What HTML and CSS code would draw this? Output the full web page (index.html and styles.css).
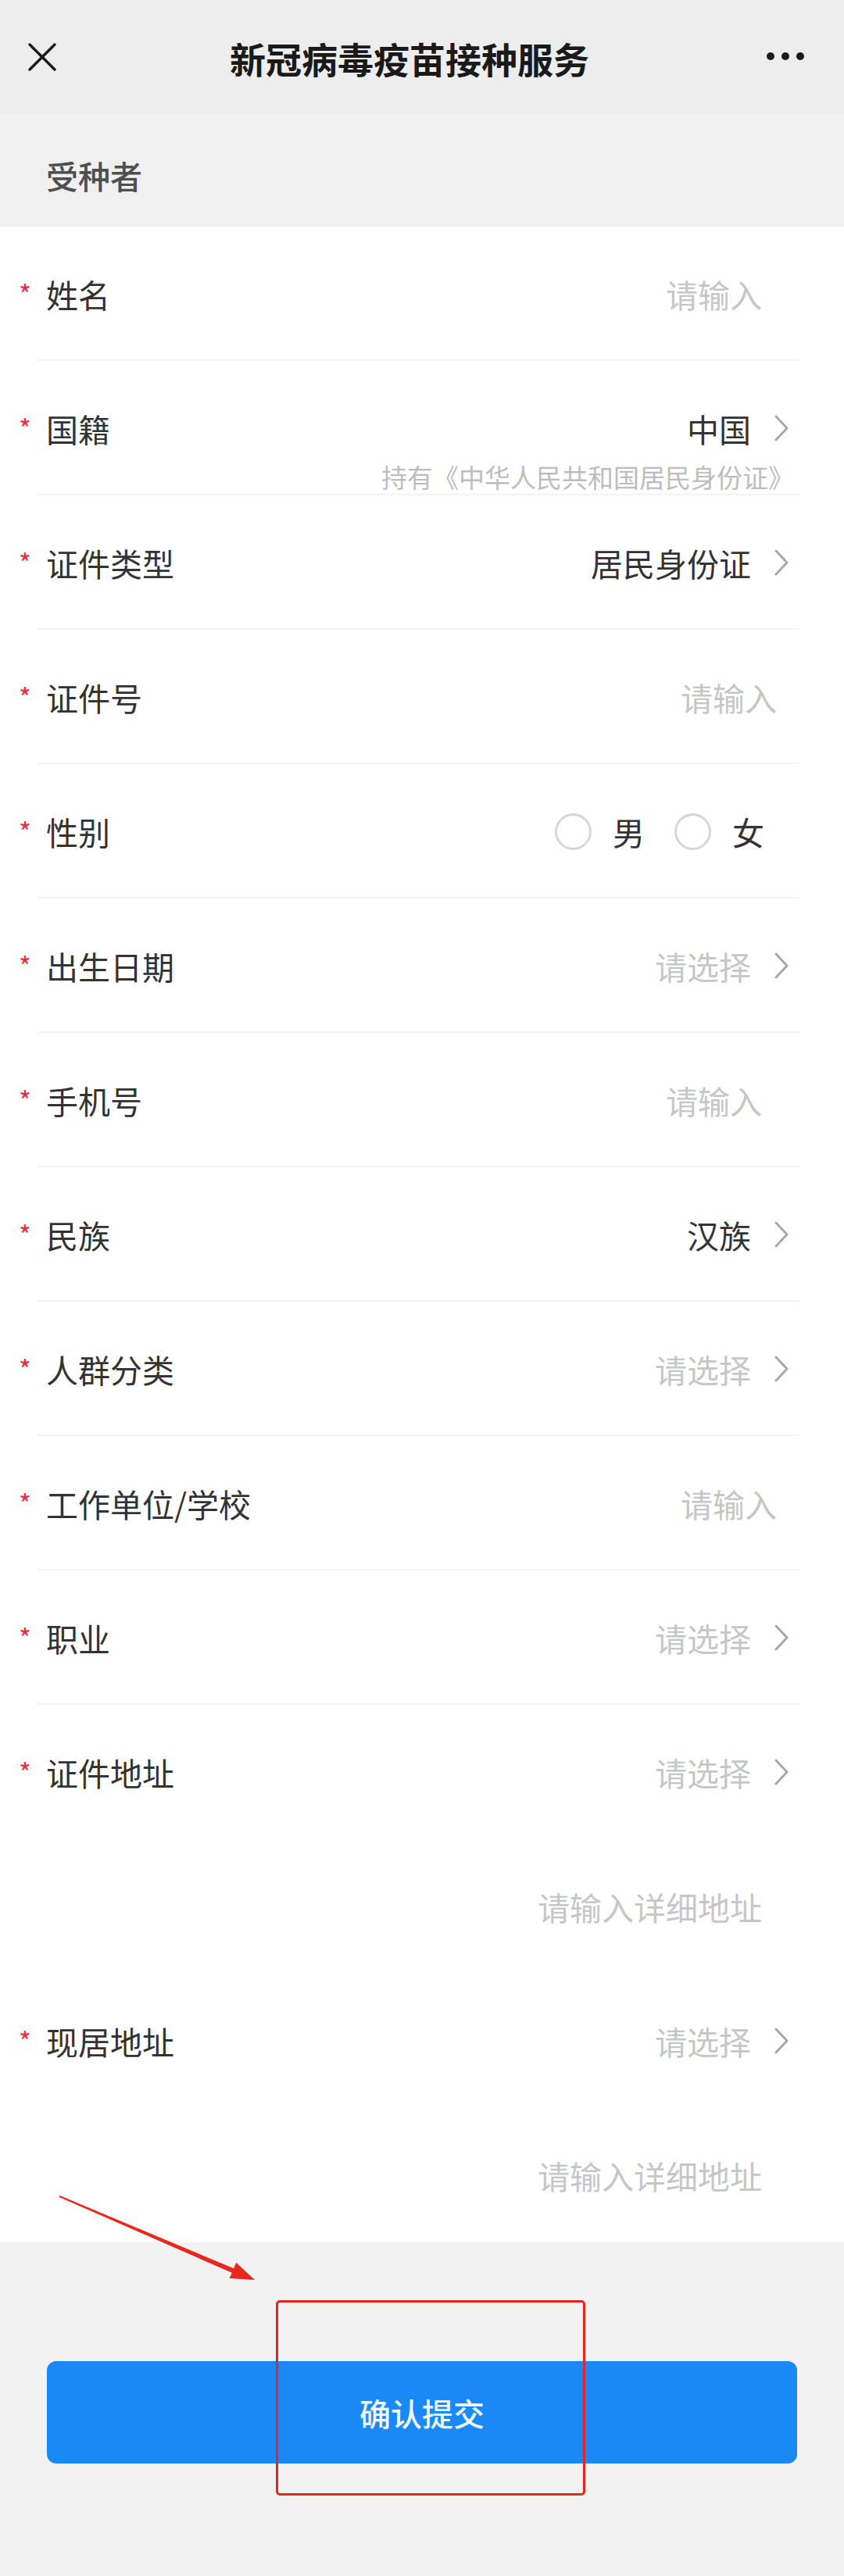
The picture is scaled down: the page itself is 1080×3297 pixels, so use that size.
FILE: index.html
```html
<!DOCTYPE html>
<html lang="zh-CN">
<head>
<meta charset="utf-8">
<title>新冠病毒疫苗接种服务</title>
<link rel="stylesheet" href="styles.css">
</head>
<body>
<div class="page">
  <header class="nav">
    <svg class="nav-close" viewBox="0 0 36 36" width="36" height="36"><path d="M2 2 L34 34 M34 2 L2 34" stroke="#1a1a1a" stroke-width="3.4" fill="none" stroke-linecap="round"/></svg>
    <h1 class="nav-title">新冠病毒疫苗接种服务</h1>
    <svg class="nav-more" viewBox="0 0 50 12" width="50" height="12"><circle cx="6" cy="6" r="5" fill="#1a1a1a"/><circle cx="25" cy="6" r="5" fill="#1a1a1a"/><circle cx="44" cy="6" r="5" fill="#1a1a1a"/></svg>
  </header>

  <div class="section-title">受种者</div>

  <div class="form">
    <div class="row line">
      <span class="star">*</span><span class="label">姓名</span>
      <span class="ph ph-a">请输入</span>
    </div>
    <div class="row row-tall line">
      <div class="row-main">
        <span class="star">*</span><span class="label">国籍</span>
        <span class="value">中国</span>
        <svg class="chev" viewBox="0 0 20 34" width="20" height="34"><path d="M3 2 L17 17 L3 32" stroke="#a8a8a8" stroke-width="3" fill="none" stroke-linejoin="round" stroke-linecap="round"/></svg>
      </div>
      <div class="sub">持有《中华人民共和国居民身份证》</div>
    </div>
    <div class="row line">
      <span class="star">*</span><span class="label">证件类型</span>
      <span class="value">居民身份证</span>
      <svg class="chev" viewBox="0 0 20 34" width="20" height="34"><path d="M3 2 L17 17 L3 32" stroke="#a8a8a8" stroke-width="3" fill="none" stroke-linejoin="round" stroke-linecap="round"/></svg>
    </div>
    <div class="row line">
      <span class="star">*</span><span class="label">证件号</span>
      <span class="ph ph-b">请输入</span>
    </div>
    <div class="row line">
      <span class="star">*</span><span class="label">性别</span>
      <div class="radios">
        <span class="radio"></span><span class="radio-text">男</span>
        <span class="radio"></span><span class="radio-text">女</span>
      </div>
    </div>
    <div class="row line">
      <span class="star">*</span><span class="label">出生日期</span>
      <span class="ph">请选择</span>
      <svg class="chev" viewBox="0 0 20 34" width="20" height="34"><path d="M3 2 L17 17 L3 32" stroke="#a8a8a8" stroke-width="3" fill="none" stroke-linejoin="round" stroke-linecap="round"/></svg>
    </div>
    <div class="row line">
      <span class="star">*</span><span class="label">手机号</span>
      <span class="ph ph-a">请输入</span>
    </div>
    <div class="row line">
      <span class="star">*</span><span class="label">民族</span>
      <span class="value">汉族</span>
      <svg class="chev" viewBox="0 0 20 34" width="20" height="34"><path d="M3 2 L17 17 L3 32" stroke="#a8a8a8" stroke-width="3" fill="none" stroke-linejoin="round" stroke-linecap="round"/></svg>
    </div>
    <div class="row line">
      <span class="star">*</span><span class="label">人群分类</span>
      <span class="ph">请选择</span>
      <svg class="chev" viewBox="0 0 20 34" width="20" height="34"><path d="M3 2 L17 17 L3 32" stroke="#a8a8a8" stroke-width="3" fill="none" stroke-linejoin="round" stroke-linecap="round"/></svg>
    </div>
    <div class="row line">
      <span class="star">*</span><span class="label">工作单位/学校</span>
      <span class="ph ph-b">请输入</span>
    </div>
    <div class="row line">
      <span class="star">*</span><span class="label">职业</span>
      <span class="ph">请选择</span>
      <svg class="chev" viewBox="0 0 20 34" width="20" height="34"><path d="M3 2 L17 17 L3 32" stroke="#a8a8a8" stroke-width="3" fill="none" stroke-linejoin="round" stroke-linecap="round"/></svg>
    </div>
    <div class="row">
      <span class="star">*</span><span class="label">证件地址</span>
      <span class="ph">请选择</span>
      <svg class="chev" viewBox="0 0 20 34" width="20" height="34"><path d="M3 2 L17 17 L3 32" stroke="#a8a8a8" stroke-width="3" fill="none" stroke-linejoin="round" stroke-linecap="round"/></svg>
    </div>
    <div class="row">
      <span class="ph ph-a">请输入详细地址</span>
    </div>
    <div class="row">
      <span class="star">*</span><span class="label">现居地址</span>
      <span class="ph">请选择</span>
      <svg class="chev" viewBox="0 0 20 34" width="20" height="34"><path d="M3 2 L17 17 L3 32" stroke="#a8a8a8" stroke-width="3" fill="none" stroke-linejoin="round" stroke-linecap="round"/></svg>
    </div>
    <div class="row">
      <span class="ph ph-a">请输入详细地址</span>
    </div>
  </div>

  <footer class="footer">
    <button class="submit" type="button">确认提交</button>
  </footer>

  <svg class="annot-arrow" viewBox="0 0 400 160" width="400" height="160">
    <polygon points="76.4,30.1 75.6,31.9 298.8,129.8 301.2,124.2" fill="#e8281e"/>
    <polygon points="326,138 293.7,136.1 302.3,115.9" fill="#e8281e"/>
  </svg>
  <div class="annot-box"></div>
</div>
</body>
</html>
```

FILE: styles.css
```css
* {
  box-sizing: border-box;
}

html, body {
  margin: 0;
  padding: 0;
}

body {
  background: #f2f2f2;
  font-family: "Noto Sans CJK SC", "Noto Sans", "Liberation Sans", sans-serif;
  color: #333333;
}

.page {
  position: relative;
  width: 1080px;
  min-height: 3297px;
  display: flex;
  flex-direction: column;
}

/* top navigation */
.nav {
  height: 147px;
  background: #ededed;
  display: flex;
  align-items: center;
  padding: 0 50px 0 36px;
}

.nav-close {
  flex: none;
  margin-top: -2px;
}

.nav-title {
  flex: 1;
  margin: 0;
  text-align: center;
  font-size: 46px;
  font-weight: 600;
  color: #1a1a1a;
  line-height: 60px;
  margin-right: 4px;
}

.nav-more {
  flex: none;
  margin-top: -4px;
}

/* section header */
.section-title {
  height: 143px;
  background: #f0f0f0;
  padding: 47px 0 0 59px;
  font-size: 41px;
  line-height: 60px;
  font-weight: 500;
  color: #4f4f4f;
}

/* form */
.form {
  background: #ffffff;
  display: flex;
  flex-direction: column;
}

.row {
  height: 172px;
  display: flex;
  align-items: center;
  padding-left: 24px;
  font-size: 41px;
  line-height: 60px;
}

.line {
  background-image: linear-gradient(#f3f3f3, #f3f3f3);
  background-repeat: no-repeat;
  background-position: 48px 100%;
  background-size: 975px 2px;
}

.star {
  width: 35px;
  flex: none;
  color: #ee2a3c;
  font-size: 34px;
  line-height: 30px;
  align-self: center;
  margin-top: 0;
}

.label {
  color: #333333;
  white-space: nowrap;
}

.value {
  margin-left: auto;
  color: #333333;
  white-space: nowrap;
}

.ph {
  margin-left: auto;
  color: #c6c6c6;
  white-space: nowrap;
}

.ph-a {
  margin-right: 105px;
}

.ph-b {
  margin-right: 86px;
}

.chev {
  flex: none;
  margin-left: 29px;
  margin-right: 70px;
}

/* tall row with sub text */
.row-tall {
  flex-direction: column;
  align-items: stretch;
  padding-top: 56px;
}

.row-main {
  height: 60px;
  display: flex;
  align-items: center;
}

.sub {
  margin-top: 12px;
  text-align: right;
  padding-right: 64px;
  font-size: 33px;
  line-height: 40px;
  color: #bdbdbd;
  white-space: nowrap;
}

/* gender radios */
.radios {
  margin-left: auto;
  margin-right: 102px;
  display: flex;
  align-items: center;
}

.radio {
  width: 47px;
  height: 47px;
  border: 3px solid #d6d6d6;
  border-radius: 50%;
  margin-right: 27px;
}

.radio-text {
  color: #333333;
  margin-right: 38px;
}

.radio-text:last-child {
  margin-right: 0;
}

/* footer */
.footer {
  flex: 1;
  background: #f2f2f2;
  padding: 152px 60px 0 60px;
}

.submit {
  display: block;
  width: 100%;
  height: 131px;
  border: none;
  border-radius: 12px;
  background: #1a89f5;
  color: #eef6ff;
  font-family: "Noto Sans CJK SC", "Noto Sans", sans-serif;
  font-size: 40px;
  font-weight: 500;
  padding: 0;
}

/* annotations drawn over the screenshot */
.annot-arrow {
  position: absolute;
  left: 0;
  top: 2780px;
}

.annot-box {
  position: absolute;
  left: 353px;
  top: 2944px;
  width: 396px;
  height: 250px;
  border: 3px solid #e3261f;
  border-radius: 5px;
}
```
